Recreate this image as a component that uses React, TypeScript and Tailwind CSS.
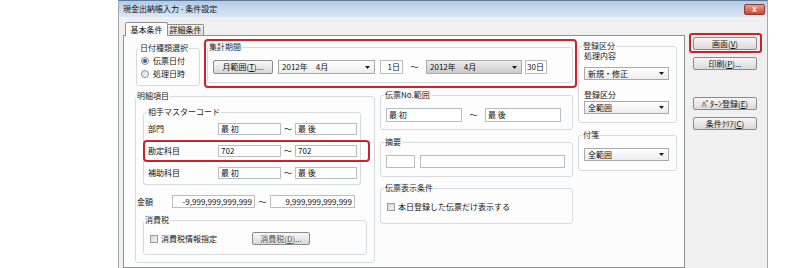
import React from "react";

const font = "font-['Noto_Sans_CJK_JP','Noto_Sans_CJK_SC',sans-serif]";

type P = { className?: string; children?: React.ReactNode };

function Group({ label, legendClass = "", className = "", children }: P & { label: string; legendClass?: string }) {
  return (
    <fieldset className={`rounded-[3px] border border-[#d6dadd] bg-[#fdfdfd] ${className}`}>
      <legend className={`px-px text-[8px] leading-[10px] text-[#1e1e1e] ${legendClass}`}>{label}</legend>
      {children}
    </fieldset>
  );
}

function Field({ className = "", right = false, children }: P & { right?: boolean }) {
  return (
    <div
      className={`flex h-full items-center whitespace-nowrap border border-[#b9bcc2] bg-white px-[2px] text-[8px] leading-none text-[#111] ${
        right ? "justify-end" : ""
      } ${className}`}
    >
      {children}
    </div>
  );
}

function Arrow() {
  return (
    <svg width="5" height="3" viewBox="0 0 5 3" className="shrink-0">
      <polygon points="0,0 5,0 2.5,3" fill="#1a1a1a" />
    </svg>
  );
}

function Combo({ className = "", active = false, children }: P & { active?: boolean }) {
  return (
    <div
      className={`flex items-center justify-between whitespace-nowrap border border-[#a9a9a9] pl-[3px] pr-[4px] text-[8px] leading-none text-[#111] ${
        active ? "bg-linear-to-b from-[#ededed] to-[#cbcbcb]" : "bg-linear-to-b from-white to-[#ececec]"
      } ${className}`}
    >
      <span>{children}</span>
      <Arrow />
    </div>
  );
}

function Btn({ className = "", children }: P) {
  return (
    <div
      className={`flex items-center justify-center whitespace-nowrap rounded-[2px] border border-[#8b8b8b] bg-linear-to-b from-[#f7f7f7] to-[#d9d9d9] text-[8px] leading-none text-[#111] ${className}`}
    >
      {children}
    </div>
  );
}

function Check() {
  return <div className="h-[8px] w-[8px] shrink-0 border border-[#9a9a9a] bg-linear-to-br from-[#d8d8d8] to-[#f4f4f4]" />;
}

function Radio({ on = false }: { on?: boolean }) {
  return (
    <div className="flex h-[8px] w-[8px] shrink-0 items-center justify-center rounded-full border border-[#8e8f8f] bg-linear-to-br from-[#dcdcdc] to-[#fafafa]">
      {on && <div className="h-[4px] w-[4px] rounded-full bg-[#3a5f8c]" />}
    </div>
  );
}

const Tilde = ({ className = "" }: P) => (
  <span className={`text-center text-[8px] leading-none text-[#222] ${className}`}>～</span>
);

const masterRows = [
  { label: "部門", a: "最 初", b: "最 後", mark: false },
  { label: "勘定科目", a: "702", b: "702", mark: true },
  { label: "補助科目", a: "最 初", b: "最 後", mark: false },
];

export default function App() {
  return (
    <div className={`relative h-[268px] w-[800px] overflow-hidden bg-white ${font}`}>
      <div className="ml-[118px] flex h-[268px] w-[650px] flex-col border-x border-t border-l-[#a3a8ae] border-r-[#7db3dd] border-t-[#5f7896]">
        {/* title bar */}
        <div className="flex h-[16px] shrink-0 items-center justify-between bg-linear-to-b from-[#b3cbe6] to-[#dbe7f4] pl-[4px] pr-[2px]">
          <span className="text-[8px] leading-none text-[#111]">現金出納帳入力 - 条件設定</span>
          <div className="flex h-[11px] w-[21px] items-center justify-center rounded-[2px] border border-[#8e3a33] bg-linear-to-b from-[#e8a08f] to-[#c7443a] text-[8px] font-bold leading-none text-white">
            x
          </div>
        </div>

        <div className="flex flex-1 bg-[#f0f0f0] pl-[4px]">
          {/* tab area */}
          <div className="flex w-[562px] flex-col pt-[5px]">
            <div className="flex h-[13px] items-end pl-[2px]">
              <div className="relative z-10 -mb-px flex h-[14px] w-[43px] items-center justify-center rounded-t-[2px] border border-b-0 border-[#8e8f8f] bg-[#fcfcfc] text-[8px] leading-none text-[#111]">
                基本条件
              </div>
              <div className="flex h-[11px] w-[36px] items-center justify-center rounded-tr-[2px] border border-b-0 border-l-0 border-[#8e8f8f] bg-linear-to-b from-[#f3f3f3] to-[#dddddd] text-[8px] leading-none text-[#111]">
                詳細条件
              </div>
            </div>

            <div className="flex flex-1 border border-[#8e8f8f] bg-[#fcfcfc] pl-[11px] pt-[3px]">
              <div className="flex w-[442px] flex-col">
                {/* top row */}
                <div className="flex h-[49px]">
                  <Group label="日付種類選択" legendClass="ml-[2px]" className="ml-[1px] mt-[4px] h-[43px] w-[64px]">
                    <div className="mt-px flex flex-col pl-[4px]">
                      <div className="flex h-[13px] items-center gap-[4px] text-[8px] leading-none text-[#111]">
                        <Radio on />
                        伝票日付
                      </div>
                      <div className="flex h-[13px] items-center gap-[4px] text-[8px] leading-none text-[#111]">
                        <Radio />
                        処理日時
                      </div>
                    </div>
                  </Group>

                  <div className="ml-[4px] h-[49px] w-[373px] rounded-[4px] border-2 border-[#c9242b] pl-px pt-px">
                    <Group label="集計期間" className="h-[41px] w-[366px]">
                      <div className="mt-[8px] flex h-[14px] items-center pl-[5px]">
                        <Btn className="h-[14px] w-[60px]">
                          月範囲(<u>T</u>)...
                        </Btn>
                        <Combo className="ml-[5px] h-[14px] w-[97px]">2012年　4月</Combo>
                        <Field right className="ml-[5px] w-[23px]">
                          1日
                        </Field>
                        <Tilde className="w-[23px]" />
                        <Combo active className="h-[14px] w-[96px]">
                          2012年　4月
                        </Combo>
                        <Field right className="ml-[3px] w-[22px]">
                          30日
                        </Field>
                      </div>
                    </Group>
                  </div>
                </div>

                {/* bottom row */}
                <div className="mt-[2px] flex">
                  <Group label="明細項目" className="mt-px h-[172px] w-[240px]">
                    <Group label="相手マスターコード" legendClass="ml-[3px]" className="ml-[7px] mt-[6px] h-[78px] w-[218px]">
                      <div className="flex flex-col gap-[10px] pl-[4px] pt-[6px]">
                        {masterRows.map((r) => (
                          <div key={r.label} className="relative flex h-[12px] items-center">
                            <span className="w-[70px] text-[8px] leading-none text-[#111]">{r.label}</span>
                            <Field className="w-[63px]">{r.a}</Field>
                            <Tilde className="w-[14px]" />
                            <Field className="w-[62px]">{r.b}</Field>
                            {r.mark && (
                              <div className="absolute -inset-y-[5px] -left-[5px] -right-[10px] rounded-[4px] border-2 border-[#c9242b]" />
                            )}
                          </div>
                        ))}
                      </div>
                    </Group>

                    <div className="mt-[10px] flex h-[13px] items-center pl-[1px]">
                      <span className="w-[35px] text-[8px] leading-none text-[#111]">金額</span>
                      <Field right className="w-[83px]">
                        -9,999,999,999,999
                      </Field>
                      <Tilde className="w-[15px]" />
                      <Field right className="w-[85px]">
                        9,999,999,999,999
                      </Field>
                    </div>

                    <Group label="消費税" className="ml-[7px] mt-[7px] h-[40px] w-[224px]">
                      <div className="mt-[7px] flex h-[13px] items-center pl-[6px]">
                        <Check />
                        <span className="ml-[3px] w-[91px] text-[8px] leading-none text-[#111]">消費税情報指定</span>
                        <Btn className="h-[13px] w-[58px] text-[#555]">
                          消費税(<u>D</u>)...
                        </Btn>
                      </div>
                    </Group>
                  </Group>

                  <div className="ml-[5px] flex w-[193px] flex-col">
                    <Group label="伝票No.範囲" legendClass="ml-[3px]" className="h-[40px] w-[193px]">
                      <div className="mt-[8px] flex h-[14px] items-center pl-[5px]">
                        <Field className="w-[76px]">最 初</Field>
                        <Tilde className="w-[23px]" />
                        <Field className="w-[76px]">最 後</Field>
                      </div>
                    </Group>
                    <Group label="摘要" legendClass="ml-[3px]" className="mt-[7px] h-[40px] w-[193px]">
                      <div className="mt-[8px] flex h-[13px] items-center pl-[5px]">
                        <Field className="w-[29px]" />
                        <Field className="ml-[5px] w-[145px]" />
                      </div>
                    </Group>
                    <Group label="伝票表示条件" legendClass="ml-[3px]" className="mt-[6px] h-[41px] w-[193px]">
                      <div className="mt-[8px] flex h-[12px] items-center pl-[6px]">
                        <Check />
                        <span className="ml-[3px] text-[8px] leading-none text-[#111]">本日登録した伝票だけ表示する</span>
                      </div>
                    </Group>
                  </div>
                </div>
              </div>

              {/* right groups */}
              <div className="ml-[1px] flex w-[99px] flex-col pt-[2px]">
                <Group label="登録区分" legendClass="ml-[3px]" className="h-[82px] w-[99px]">
                  <div className="flex flex-col pl-[5px]">
                    <span className="text-[8px] leading-[10px] text-[#111]">処理内容</span>
                    <Combo className="mt-[6px] h-[13px] w-[85px]">新規・修正</Combo>
                    <span className="mt-[10px] text-[8px] leading-[10px] text-[#111]">登録区分</span>
                    <Combo className="mt-px h-[13px] w-[85px]">全範囲</Combo>
                  </div>
                </Group>
                <Group label="付箋" legendClass="ml-[3px]" className="mt-[7px] h-[41px] w-[99px]">
                  <div className="mt-[8px] pl-[5px]">
                    <Combo className="h-[13px] w-[85px]">全範囲</Combo>
                  </div>
                </Group>
              </div>
            </div>
          </div>

          {/* buttons */}
          <div className="flex flex-col pl-[4px] pt-[16px]">
            <div className="h-[20px] w-[73px] rounded-[3px] border-2 border-[#c9242b] p-[2px]">
              <Btn className="h-[13px] w-[64px]">
                画面(<u>V</u>)
              </Btn>
            </div>
            <Btn className="ml-[4px] mt-[4px] h-[13px] w-[64px]">
              印刷(<u>P</u>)...
            </Btn>
            <Btn className="ml-[4px] mt-[27px] h-[13px] w-[64px]">
              ﾊﾟﾀｰﾝ登録(<u>E</u>)
            </Btn>
            <Btn className="ml-[4px] mt-[7px] h-[13px] w-[64px]">
              条件ｸﾘｱ(<u>C</u>)
            </Btn>
          </div>
        </div>
      </div>
    </div>
  );
}
